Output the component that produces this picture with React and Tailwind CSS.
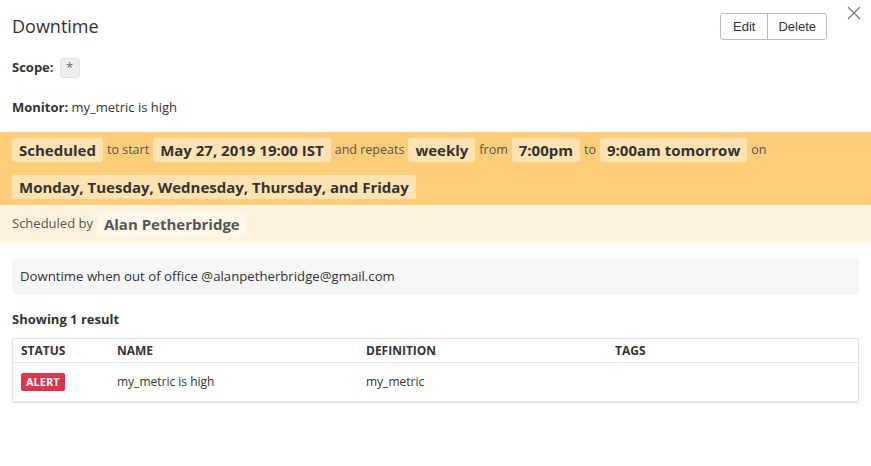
const FONT = { fontFamily: '"Open Sans", "Noto Sans", sans-serif' };

function Chip({ children }) {
  return (
    <span className="inline-block rounded-[3px] bg-[#fde2b2] px-[7px] py-[1px] text-[15px] leading-[22px] font-bold text-[#333]">
      {children}
    </span>
  );
}

function Word({ children }) {
  return <span className="mx-[4px] text-[12.5px] text-[#555]">{children}</span>;
}

const COLUMNS = [
  { label: 'STATUS', w: 'w-[96px]' },
  { label: 'NAME', w: 'w-[249px]' },
  { label: 'DEFINITION', w: 'w-[249px]' },
  { label: 'TAGS', w: 'flex-1' },
];

export default function App() {
  return (
    <div className="w-[871px] h-[466px] bg-white text-[#333] relative" style={FONT}>
      <div className="flex items-start justify-between pl-3 pr-[44px] pt-[14px]">
        <h1 className="text-[18px] leading-[24px] text-[#333]">Downtime</h1>
        <div className="flex mt-[-1px] rounded-[3px] border border-[#bbb] overflow-hidden text-[13px] text-[#333]" style={{ fontFamily: '"Liberation Sans", Arial, sans-serif' }}>
          <button className="h-[25px] px-[12px] border-r border-[#bbb] bg-white">Edit</button>
          <button className="h-[25px] px-[10px] bg-white">Delete</button>
        </div>
      </div>
      <button className="absolute right-[9px] top-[5px] text-[#777]">
        <svg width="16" height="16" viewBox="0 0 16 16" stroke="currentColor" strokeWidth="1.2">
          <path d="M2 2 L14 14 M14 2 L2 14" />
        </svg>
      </button>

      <div className="px-3 mt-[18px] flex items-center text-[13px]">
        <span className="font-bold">Scope:</span>
        <span className="ml-[6px] inline-flex items-center justify-center w-[20px] h-[20px] rounded-[3px] bg-[#eee] border border-[#e2e2e2] text-[#666]">*</span>
      </div>

      <div className="px-3 mt-[20px] text-[13px] leading-[18px]">
        <span className="font-bold">Monitor:</span> my_metric is high
      </div>

      <div className="mt-[16px] bg-[#fdcd79] px-3 pt-[6px] pb-[6px]">
        <div className="flex items-center h-[24px]">
          <Chip>Scheduled</Chip>
          <Word>to start</Word>
          <Chip>May 27, 2019 19:00 IST</Chip>
          <Word>and repeats</Word>
          <Chip>weekly</Chip>
          <Word>from</Word>
          <Chip>7:00pm</Chip>
          <Word>to</Word>
          <Chip>9:00am tomorrow</Chip>
          <Word>on</Word>
        </div>
        <div className="flex items-center h-[24px] mt-[13px]">
          <Chip>Monday, Tuesday, Wednesday, Thursday, and Friday</Chip>
        </div>
      </div>

      <div className="bg-[#fef2dc] px-3 h-[38px] flex items-center">
        <span className="text-[13px] text-[#555]">Scheduled by</span>
        <span className="ml-[4px] inline-block rounded-[3px] bg-[#fff7ea] px-[7px] py-[2px] text-[15px] leading-[22px] font-bold text-[#555]">
          Alan Petherbridge
        </span>
      </div>

      <div className="mx-3 mt-[16px] h-[35px] bg-[#f5f6f8] rounded-[2px] flex items-center px-2 text-[13.2px] text-[#333]">
        Downtime when out of office @alanpetherbridge@gmail.com
      </div>

      <div className="px-3 mt-[16px] text-[13px] font-bold leading-[18px]">Showing 1 result</div>

      <div className="mx-3 mt-[10px] border border-[#e2e2e2] rounded-[2px] shadow-[0_1px_2px_rgba(0,0,0,0.12)]">
        <div className="flex h-[24px] items-center border-b border-[#e6e6e6] text-[12px] font-bold text-[#333]">
          {COLUMNS.map((c) => (
            <div key={c.label} className={`${c.w} pl-2`}>{c.label}</div>
          ))}
        </div>
        <div className="flex h-[38px] items-center text-[12px] text-[#333]">
          <div className="w-[96px] pl-2">
            <span className="inline-block rounded-[2px] bg-[#e0344a] px-[5px] text-[11px] leading-[18px] font-bold text-white">ALERT</span>
          </div>
          <div className="w-[249px] pl-2">my_metric is high</div>
          <div className="w-[249px] pl-2">my_metric</div>
          <div className="flex-1 pl-2"></div>
        </div>
      </div>
    </div>
  );
}
